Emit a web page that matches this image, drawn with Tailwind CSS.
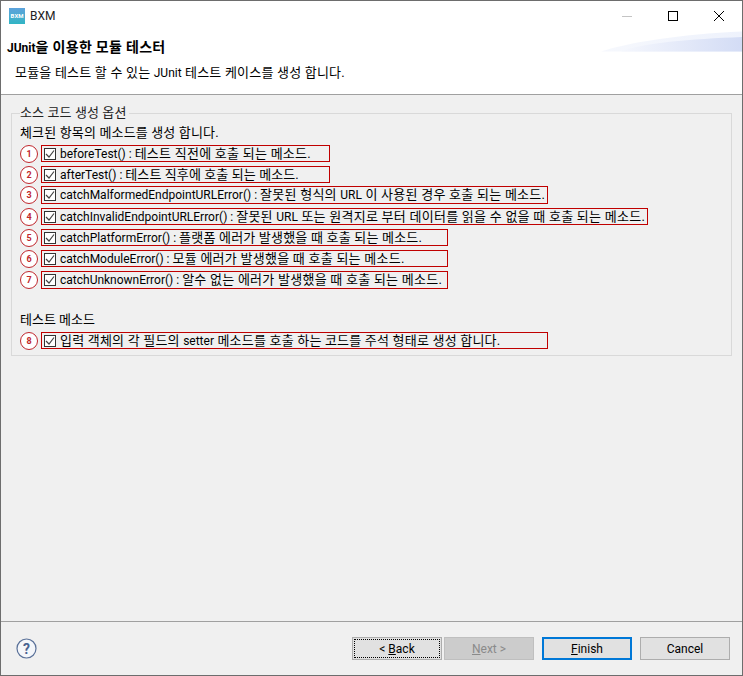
<!DOCTYPE html>
<html lang="ko">
<head>
  <meta charset="UTF-8" />
  <title>BXM</title>
  <script src="https://cdn.jsdelivr.net/npm/@tailwindcss/browser@4"></script>
</head>
<body class="bg-white">
  <div class="relative flex flex-col w-[743px] h-[676px] overflow-hidden border border-[#6d6d6d] bg-[#f0f0f0] text-[12px] leading-[16px] text-black font-['Roboto','Noto_Sans_CJK_KR',sans-serif]">

    <!-- title bar -->
    <div class="flex items-center h-[30px] bg-white pl-[8px]">
      <div class="flex items-center justify-center w-[16px] h-[16px] bg-gradient-to-b from-[#5ca2dc] to-[#2fb5c4] text-white text-[6px] font-bold leading-none">BXM</div>
      <span class="ml-[5px] text-[#222]">BXM</span>
      <div class="ml-auto flex items-center h-full">
        <div class="flex items-center justify-center w-[46px] h-full">
          <svg width="12" height="12" viewBox="0 0 12 12"><path d="M1 6.5h10" stroke="#c4c4c4" stroke-width="1" /></svg>
        </div>
        <div class="flex items-center justify-center w-[46px] h-full">
          <svg width="12" height="12" viewBox="0 0 12 12"><rect x="1.5" y="1.5" width="9" height="9" fill="none" stroke="#000" stroke-width="1" /></svg>
        </div>
        <div class="flex items-center justify-center w-[46px] h-full">
          <svg width="12" height="12" viewBox="0 0 12 12"><path d="M1 1l10 10M11 1L1 11" stroke="#000" stroke-width="1" /></svg>
        </div>
      </div>
    </div>

    <!-- wizard header -->
    <div class="relative h-[63px] bg-white border-b border-[#a0a0a0] box-content">
      <svg class="absolute right-0 top-0" width="141" height="21" viewBox="0 0 141 21">
        <defs>
          <linearGradient id="waveLight" x1="0" x2="1" y1="0" y2="0">
            <stop offset="0" stop-color="#f6f8fd" />
            <stop offset="1" stop-color="#eef2fc" />
          </linearGradient>
          <linearGradient id="waveDark" x1="0" x2="1" y1="0" y2="0">
            <stop offset="0" stop-color="#f5f7fd" />
            <stop offset="1" stop-color="#d3dcf5" />
          </linearGradient>
        </defs>
        <path d="M0 20.5C25 12 80 3 141 0.5V20.5Z" fill="url(#waveLight)" />
        <path d="M20 20.5C40 12 90 8 141 6V20.5Z" fill="url(#waveDark)" />
      </svg>
      <div class="pl-[6px] pt-[8px] font-bold">JUnit<span class="text-[14px] tracking-[0.3px]">을 이용한 모듈 테스터</span></div>
      <div class="pl-[14px] pt-[9px]"><span class="text-[13px] tracking-[0.2px]">모듈을 테스트 할 수 있는 </span>JUnit<span class="text-[13px] tracking-[0.2px]"> 테스트 케이스를 생성 합니다.</span></div>
    </div>

    <!-- options -->
    <div class="flex-1 px-[10px] pt-[10px]">
      <fieldset class="h-[251px] border border-[#d9d9d9] pl-[8px]">
        <legend class="pr-[3px] text-[#222] text-[13px] tracking-[0.1px]">소스 코드 생성 옵션</legend>
        <p class="mt-[4px] text-[13px] tracking-[0.15px]">체크된 항목의 메소드를 생성 합니다.</p>

        <div class="flex flex-col mt-[4px]">
          <div class="flex items-center gap-[3px] h-[17px]">
            <span class="flex items-center justify-center w-[18px] h-[18px] rounded-full border-[1.5px] border-[#c0272d] bg-white text-[#c0272d] text-[9px] font-bold">1</span>
            <div class="flex items-center gap-[4px] w-[289px] h-[17px] border border-[#c00000] pl-[2px]">
              <svg width="12" height="12" viewBox="0 0 12 12"><rect x="0.5" y="0.5" width="11" height="11" fill="#fff" stroke="#333" /><path d="M2 6l3 3 5-6.5" fill="none" stroke="#444" stroke-width="1.2" /></svg>
              <span>beforeTest() : <span class="text-[13px] tracking-[0.25px]">테스트 직전에 호출 되는 메소드.</span></span>
            </div>
          </div>
          <div class="flex items-center gap-[3px] h-[17px] mt-[4px]">
            <span class="flex items-center justify-center w-[18px] h-[18px] rounded-full border-[1.5px] border-[#c0272d] bg-white text-[#c0272d] text-[9px] font-bold">2</span>
            <div class="flex items-center gap-[4px] w-[289px] h-[17px] border border-[#c00000] pl-[2px]">
              <svg width="12" height="12" viewBox="0 0 12 12"><rect x="0.5" y="0.5" width="11" height="11" fill="#fff" stroke="#333" /><path d="M2 6l3 3 5-6.5" fill="none" stroke="#444" stroke-width="1.2" /></svg>
              <span>afterTest() : <span class="text-[13px] tracking-[0.1px]">테스트 직후에 호출 되는 메소드.</span></span>
            </div>
          </div>
          <div class="flex items-center gap-[3px] h-[18px] mt-[3px]">
            <span class="flex items-center justify-center w-[18px] h-[18px] rounded-full border-[1.5px] border-[#c0272d] bg-white text-[#c0272d] text-[9px] font-bold">3</span>
            <div class="flex items-center gap-[4px] w-[507px] h-[18px] border border-[#c00000] pl-[2px]">
              <svg width="12" height="12" viewBox="0 0 12 12"><rect x="0.5" y="0.5" width="11" height="11" fill="#fff" stroke="#333" /><path d="M2 6l3 3 5-6.5" fill="none" stroke="#444" stroke-width="1.2" /></svg>
              <span>catchMalformedEndpointURLError() : <span class="text-[13px] tracking-[0.25px]">잘못된 형식의 </span>URL<span class="text-[13px] tracking-[0.25px]"> 이 사용된 경우 호출 되는 메소드.</span></span>
            </div>
          </div>
          <div class="flex items-center gap-[3px] h-[17px] mt-[4px]">
            <span class="flex items-center justify-center w-[18px] h-[18px] rounded-full border-[1.5px] border-[#c0272d] bg-white text-[#c0272d] text-[9px] font-bold">4</span>
            <div class="flex items-center gap-[4px] w-[607px] h-[17px] border border-[#c00000] pl-[2px]">
              <svg width="12" height="12" viewBox="0 0 12 12"><rect x="0.5" y="0.5" width="11" height="11" fill="#fff" stroke="#333" /><path d="M2 6l3 3 5-6.5" fill="none" stroke="#444" stroke-width="1.2" /></svg>
              <span>catchInvalidEndpointURLError() : <span class="text-[13px] tracking-[0.25px]">잘못된 </span>URL<span class="text-[13px] tracking-[0.25px]"> 또는 원격지로 부터 데이터를 읽을 수 없을 때 호출 되는 메소드.</span></span>
            </div>
          </div>
          <div class="flex items-center gap-[3px] h-[17px] mt-[4px]">
            <span class="flex items-center justify-center w-[18px] h-[18px] rounded-full border-[1.5px] border-[#c0272d] bg-white text-[#c0272d] text-[9px] font-bold">5</span>
            <div class="flex items-center gap-[4px] w-[407px] h-[17px] border border-[#c00000] pl-[2px]">
              <svg width="12" height="12" viewBox="0 0 12 12"><rect x="0.5" y="0.5" width="11" height="11" fill="#fff" stroke="#333" /><path d="M2 6l3 3 5-6.5" fill="none" stroke="#444" stroke-width="1.2" /></svg>
              <span>catchPlatformError() : <span class="text-[13px] tracking-[0.2px]">플랫폼 에러가 발생했을 때 호출 되는 메소드.</span></span>
            </div>
          </div>
          <div class="flex items-center gap-[3px] h-[17px] mt-[4px]">
            <span class="flex items-center justify-center w-[18px] h-[18px] rounded-full border-[1.5px] border-[#c0272d] bg-white text-[#c0272d] text-[9px] font-bold">6</span>
            <div class="flex items-center gap-[4px] w-[407px] h-[17px] border border-[#c00000] pl-[2px]">
              <svg width="12" height="12" viewBox="0 0 12 12"><rect x="0.5" y="0.5" width="11" height="11" fill="#fff" stroke="#333" /><path d="M2 6l3 3 5-6.5" fill="none" stroke="#444" stroke-width="1.2" /></svg>
              <span>catchModuleError() : <span class="text-[13px] tracking-[0.25px]">모듈 에러가 발생했을 때 호출 되는 메소드.</span></span>
            </div>
          </div>
          <div class="flex items-center gap-[3px] h-[18px] mt-[4px]">
            <span class="flex items-center justify-center w-[18px] h-[18px] rounded-full border-[1.5px] border-[#c0272d] bg-white text-[#c0272d] text-[9px] font-bold">7</span>
            <div class="flex items-center gap-[4px] w-[407px] h-[18px] border border-[#c00000] pl-[2px]">
              <svg width="12" height="12" viewBox="0 0 12 12"><rect x="0.5" y="0.5" width="11" height="11" fill="#fff" stroke="#333" /><path d="M2 6l3 3 5-6.5" fill="none" stroke="#444" stroke-width="1.2" /></svg>
              <span>catchUnknownError() : <span class="text-[13px] tracking-[0.25px]">알수 없는 에러가 발생했을 때 호출 되는 메소드.</span></span>
            </div>
          </div>
        </div>

        <p class="mt-[23px] text-[13px]">테스트 메소드</p>
        <div class="flex items-center gap-[3px] h-[17px] mt-[4px]">
          <span class="flex items-center justify-center w-[18px] h-[18px] rounded-full border-[1.5px] border-[#c0272d] bg-white text-[#c0272d] text-[9px] font-bold">8</span>
          <div class="flex items-center gap-[4px] w-[507px] h-[17px] border border-[#c00000] pl-[2px]">
            <svg width="12" height="12" viewBox="0 0 12 12"><rect x="0.5" y="0.5" width="11" height="11" fill="#fff" stroke="#333" /><path d="M2 6l3 3 5-6.5" fill="none" stroke="#444" stroke-width="1.2" /></svg>
            <span><span class="text-[13px] tracking-[0.2px]">입력 객체의 각 필드의 </span>setter<span class="text-[13px] tracking-[0.2px]"> 메소드를 호출 하는 코드를 주석 형태로 생성 합니다.</span></span>
          </div>
        </div>
      </fieldset>
    </div>

    <!-- button bar -->
    <div class="flex items-center h-[53px] border-t border-[#a0a0a0] box-content pl-[15px] pr-[12px]">
      <svg width="21" height="21" viewBox="0 0 21 21"><circle cx="10.5" cy="10.5" r="9.5" fill="#f4f6fa" stroke="#5a7199" stroke-width="1.2" /><text x="10.5" y="15.5" text-anchor="middle" font-size="14" font-weight="700" fill="#4a6391">?</text></svg>
      <div class="ml-auto flex">
        <button class="flex items-center justify-center w-[90px] h-[23px] border border-[#adadad] bg-[#e1e1e1] outline-1 outline-dotted outline-black -outline-offset-3"><span>&lt; <u>B</u>ack</span></button>
        <button class="flex items-center justify-center w-[90px] h-[23px] ml-[2px] border border-[#bfbfbf] bg-[#cccccc] text-[#8a8a8a]"><span><u>N</u>ext &gt;</span></button>
        <button class="flex items-center justify-center w-[90px] h-[23px] ml-[8px] border-2 border-[#0078d7] bg-[#e1e1e1]"><span><u>F</u>inish</span></button>
        <button class="flex items-center justify-center w-[90px] h-[23px] ml-[8px] border border-[#adadad] bg-[#e1e1e1]">Cancel</button>
      </div>
    </div>
  </div>
</body>
</html>
